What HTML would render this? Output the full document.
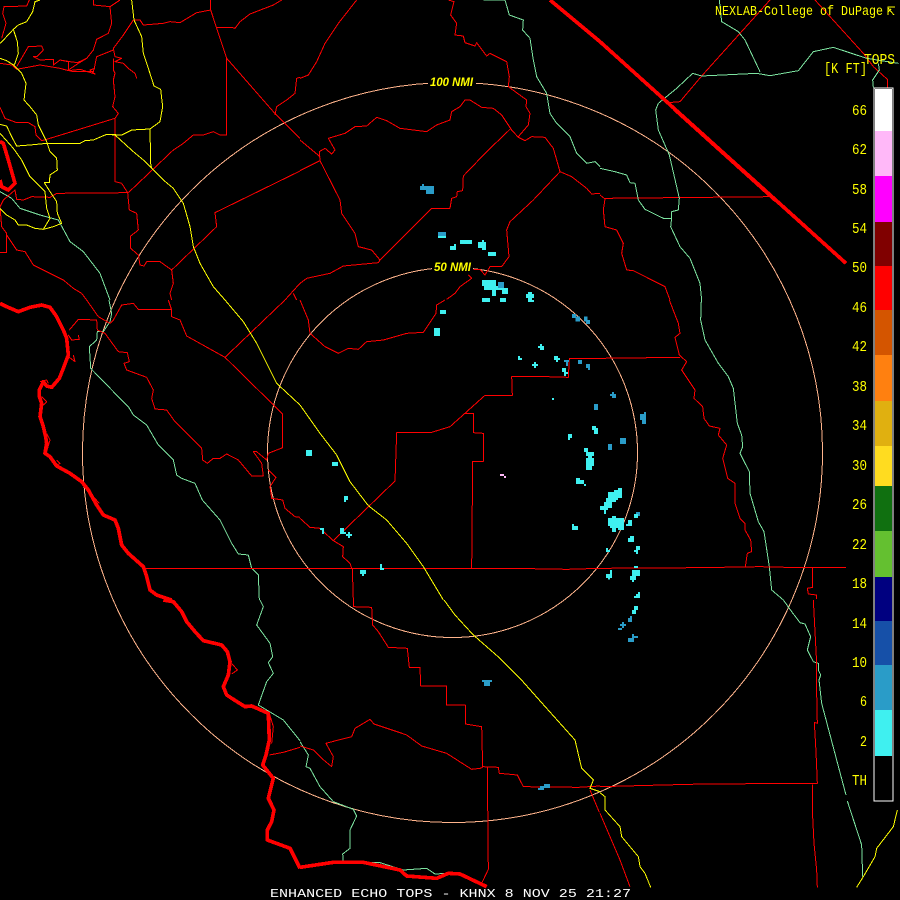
<!DOCTYPE html>
<html><head><meta charset="utf-8"><title>Enhanced Echo Tops - KHNX</title>
<style>
html,body{margin:0;padding:0;background:#000;width:900px;height:900px;overflow:hidden}
svg{display:block;position:absolute;left:0;top:0}
.l path{fill:none;stroke-width:3;stroke-linejoin:round}
.l{shape-rendering:crispEdges}
.r path{stroke:#f00}
.y path{stroke:#ff0}
.g path{stroke:#7de3a0}
.t path{stroke:#f00;stroke-width:11}
.c{fill:#3ff0f0}.b{fill:#2a9cc8}
text{font-family:"Liberation Mono",monospace;fill:#ff0}
</style></head><body>
<svg width="900" height="900" viewBox="0 0 900 900" xmlns="http://www.w3.org/2000/svg">
<rect width="900" height="900" fill="#000"/>
<g fill="none" stroke="#ffb48c" stroke-width="1" shape-rendering="crispEdges">
<circle cx="452.5" cy="452.5" r="370"/><circle cx="452.5" cy="452.5" r="185"/>
</g>
<rect x="428" y="76" width="48" height="12" fill="#000"/>
<rect x="432" y="261" width="41" height="12" fill="#000"/>

<!-- region 1 -->
<g class="l" transform="scale(.33333)">
<g class="g"><path d="M0 575L35 595 60 625 120 645 175 660 210 725 250 755 300 820 330 900"/></g>
<g class="r">
<path d="M88 0L80 18 12 20 8 40 18 70 5 115"/>
<path d="M280 0L280 15 330 20 360 0M330 20L335 70 325 100 290 118 280 150 260 175 232 188 210 185 180 180"/>
<path d="M400 60L370 105 340 145 345 170 365 175 345 185 370 190 385 205 405 220 410 235"/>
<path d="M400 60L420 60 430 75 490 70 510 65 540 68 590 38 632 30 632 0"/>
<path d="M632 30L680 175 680 405 660 405 640 395 610 405 580 405 550 430 520 450 385 578"/>
<path d="M680 175L820 335 900 415"/>
<path d="M650 82L695 82 705 85 720 65 750 42 820 15 845 0"/>
<path d="M340 150L290 170 285 195 280 215 220 215 180 205 120 195 50 208 35 195 0 190"/>
<path d="M50 200L85 140 125 138 130 150 110 170 100 170 120 180 160 178 160 195 180 180 205 185 205 210 235 190 260 175"/>
<path d="M180 205L205 212 240 208 285 222 270 210 285 205"/>
<path d="M340 175L340 210 345 220 340 240 345 290 338 320 355 340 345 355 140 418 125 422 108 405 105 380 85 368 50 368 15 355 0 322"/>
<path d="M345 355L345 545 365 550 383 578 170 580 150 592 95 590 70 600 50 598 45 570 10 600 0 620 5 680 20 700 20 757 0 757"/>
<path d="M20 705L50 750 75 755 100 795 190 840 220 865 245 880 260 900"/>
<path d="M383 578L388 630 410 640 415 690 392 708 392 745 415 765 420 795 432 798 440 785 480 785 515 810 520 850 510 880 515 900"/>
<path d="M515 810L650 680 645 638 900 513"/>
<path d="M855 900L900 850M880 880L890 900"/>
<path d="M825 345L830 320 860 300 885 280 890 235 900 232"/>
</g>
<g class="t"><path d="M0 425L10 430 25 480 45 550 25 570 5 560 0 540"/></g>
<g class="y">
<path d="M120 0L105 5 98 35 80 65 55 75 40 88 15 115 0 130"/>
<path d="M40 88L52 125 55 160 45 190 40 195"/>
<path d="M0 175L20 182 40 195 65 220 78 250 72 300 90 320 110 345 115 375 140 425 150 455 170 475 172 510 150 525 148 548 133 548 150 575 170 605 172 640 185 670 160 680 130 688 105 685 80 675 55 675 45 660 20 645 0 625"/>
<path d="M0 373L20 378 35 410 50 438 90 435 140 430 240 430 255 422 280 420 320 403 365 405 395 390 450 387 480 365 488 320 482 268 462 258 445 205 430 160 425 110 402 60 395 0"/>
<path d="M450 387L452 490 455 505"/>
<path d="M320 403L345 405 400 455 430 480 460 510 490 540 520 565 550 610 570 680 580 740 600 790 640 860 675 900"/>
<path d="M0 400L40 445 65 480 90 530 135 575 140 625 150 655 130 688"/>
</g>
</g>

<!-- region 2 -->
<g class="l" transform="translate(300,0) scale(.33333)">
<g class="g"><path d="M550 0L615 0 628 45 670 60 668 90 690 115 700 180 710 230 740 280 750 340 770 370 810 410 830 460 860 490 885 485 900 500"/></g>
<g class="r">
<path d="M170 0L115 70 75 130 50 185 25 225 0 235"/>
<path d="M445 0L462 5 452 45 470 70 465 105 490 108 495 128 525 138 530 128 560 168 570 160 620 185 628 230 625 260 680 300 678 320 690 340 685 375 655 410"/>
<path d="M0 420L60 470M0 512L60 482 58 455 75 445 95 462 105 450 85 415 135 400 165 380 200 378 230 352 260 362 300 385 380 395 410 375 450 360 455 335 480 320 495 300 510 300 545 322 580 325 605 345 635 390 655 412 675 422 695 410 735 412 760 445 780 515 815 530 860 565 875 582 900 580"/>
<path d="M60 482L120 600 125 640 165 700 175 740 215 750 240 780 395 625 450 625 455 595 470 590 472 575 488 572 490 528 560 455 630 388"/>
<path d="M240 780L235 788 130 798 90 820 20 835 0 850"/>
<path d="M780 515L700 600 630 665 620 690 627 770 605 800 570 800 555 825 540 808 520 808M505 825L515 835 480 860 465 880 440 898"/>
</g>
<g class="t"><path d="M750 0L900 125"/></g>
</g>

<!-- region 3 -->
<g class="l" transform="translate(600,0) scale(.33333)">
<g class="r">
<path d="M645 0L790 160 820 200 862 238 862 265"/>
<path d="M510 0L305 228 240 305 205 308"/>
<path d="M15 595L515 590M0 585L15 597 10 630 15 680 50 690 70 730 65 760 80 810 100 812 195 860 210 900"/>
<path d="M220 330L525 605"/>
</g>
<g class="g">
<path d="M0 505L45 515 80 525 90 548 105 550 115 600 135 628 190 655 215 655 215 635 235 630 238 595 208 465 175 390 167 330 175 310 230 265 278 220 305 228 470 220 510 227 595 212 640 155 700 142 800 175 895 190"/>
<path d="M358 0L365 65 415 95 435 120 480 215"/>
<path d="M835 190L838 210 818 240 820 262"/>
<path d="M215 655L212 680 240 740 270 775 300 850 305 900"/>
</g>
<g class="t"><path d="M0 125L738 790"/></g>
</g>

<!-- region 4 -->
<g class="l" transform="translate(0,300) scale(.33333)">
<g class="g"><path d="M327 0L335 40 330 65 310 95 292 95 290 120 268 140 272 205 345 280 385 320 400 345 440 375 475 435 520 480 530 525 545 535 585 550 607 600 660 660 695 730 715 762 745 765 755 805 775 825 778 900"/></g>
<g class="r">
<path d="M260 0L295 50 330 70M208 90L235 58 290 60 292 90 315 100 355 155 382 158 388 185 372 190 380 210 440 232 460 270 455 295 465 327 500 330 525 365 605 445 608 480 622 490 640 475 660 475 680 462 715 480 755 528 790 528 785 490 760 455 770 455 800 480 805 460 848 443 848 342 675 172 560 108 540 60 515 50 515 30 505 0"/>
<path d="M675 172L855 0"/>
<path d="M330 70L340 60 365 15 400 10 415 28 515 28"/>
<path d="M205 105L215 120 238 118 235 105M205 170L225 185 220 165"/>
<path d="M848 342L820 315"/>
<path d="M805 510L828 532 810 560 815 595 848 600 855 625 885 650 900 652"/>
<path d="M430 805L900 805"/>
<path d="M120 245L140 240 145 250M125 290L140 305 130 315M140 400L150 420 140 455M170 480L180 490 172 495M280 590L298 610"/>
</g>
<g class="t"><path d="M0 10L20 20 55 35 90 22 125 15 150 22 170 50 190 90 200 115 205 165 190 205 178 235 155 262 140 258 130 245 118 270 118 290 125 310 120 350 130 380 137 410 140 430 135 460 150 470 170 498 210 520 245 545 265 570 290 615 310 645 345 660 355 685 365 735 385 760 430 800 440 830 450 870 470 885 515 900"/></g>
<g class="y"><path d="M675 0L730 65 770 130 830 250 900 315"/></g>
</g>

<!-- region 5 -->
<g class="l" transform="translate(300,300) scale(.33333)">
<g class="r">
<path d="M0 0L25 60 30 100 75 140 115 160 145 145 175 148 200 125 250 120 320 100 370 97 408 40 410 15 435 0"/>
<path d="M100 722L285 543 290 398 395 397 450 380 555 286 637 286 635 230 740 230 805 232 808 175 900 175"/>
<path d="M0 655L30 682 60 685 100 722 130 740 128 770 150 790 155 805"/>
<path d="M495 340L520 340 520 398 550 400 550 484 518 484 515 805"/>
<path d="M157 805L160 900"/>
<path d="M0 805L635 805 800 808 900 805"/>
</g>
<g class="y"><path d="M0 315L60 400 110 465 150 545 205 617 260 660 320 730 370 800 430 900"/></g>
</g>

<!-- region 6 -->
<g class="l" transform="translate(600,300) scale(.33333)">
<g class="g"><path d="M304 0L302 60 315 120 355 190 385 230 400 265 412 370 425 405 428 440 420 460 448 515 450 580 475 665 492 695 508 800 515 870 550 900"/></g>
<g class="r">
<path d="M208 0L235 70 240 100 225 112 238 165 260 185 245 210 285 270 282 295 308 320 312 355 328 378 360 385 355 405 380 435 368 475 383 535 405 550 405 610 420 655 435 670 435 690 452 720 455 755 442 760 436 800"/>
<path d="M0 175L240 172"/>
<path d="M0 805L300 803 480 800 560 802 738 802"/>
<path d="M638 802L638 862 622 865 625 882 650 885 650 897"/>
</g>
</g>

<!-- region 7 -->
<g class="l" transform="translate(0,600) scale(.33333)">
<g class="g"><path d="M780 0L790 20 770 75 810 130 818 170 805 188 820 220 800 245 775 315 850 360 900 422"/></g>
<g class="r"><path d="M808 465L850 457 900 442M695 190L712 210 695 222M808 340L820 380 815 430"/></g>
<g class="t"><path d="M490 0L520 5 545 35 560 65 585 95 610 122 665 135 682 155 690 185 685 225 670 260 680 285 700 298 735 320 755 318 805 340 808 420 798 465 788 495 820 535 805 595 822 630 815 665 802 690 802 720 870 745 900 805"/></g>
</g>

<!-- region 8 -->
<g class="l" transform="translate(300,600) scale(.33333)">
<g class="g"><path d="M0 425L25 465 18 500 30 505 60 560 100 605 160 628 170 648 150 690 150 745 128 762 130 785 240 788 310 810 380 805 405 822 480 818 560 858"/></g>
<g class="r">
<path d="M160 0L160 20 215 22 218 75 235 95 265 142 322 145 328 202 360 202 362 258 440 258 440 315 496 315 496 372 545 380 548 500 595 502 598 520 652 525 670 560 835 562 900 558"/>
<path d="M0 438L40 450 65 475 95 500 100 470 78 430 108 422 155 410 165 385 210 358 222 372 300 398 320 405 365 438 440 460 515 508 540 505 548 502"/>
<path d="M562 502L565 808 545 850M870 570L898 637"/>
</g>
<g class="t"><path d="M0 802L100 787 190 787 300 810 320 828 410 835 445 820 480 822 560 860"/></g>
<g class="y"><path d="M432 0L465 45 520 105 600 175 660 235 740 325 825 420 845 505 880 540 870 565 900 575"/></g>
</g>

<!-- region 9 -->
<g class="l" transform="translate(600,600) scale(.33333)">
<g class="g"><path d="M550 0L575 35 600 68 615 72 632 110 622 150 640 185 655 190 655 210 662 225 657 240 665 310 710 480 738 585M742 603L785 735 788 830"/></g>
<g class="r">
<path d="M0 640L60 780 90 860"/>
<path d="M640 0L645 95 650 190 650 280 652 370 643 367 648 455 652 550 310 552 150 556 0 560"/>
<path d="M638 553L638 650 642 730 650 810 652 862"/>
</g>
<g class="y">
<path d="M0 578L15 590 15 630 60 680 65 710 115 770 120 800 135 820 152 862"/>
<path d="M892 630L880 680 830 745 825 770 790 830 770 862"/>
</g>
</g>

<!-- echoes -->
<g shape-rendering="crispEdges">
<g transform="translate(300,0) scale(.33333)">
<g class="b"><rect x="360" y="558" width="18" height="12"/><rect x="378" y="558" width="24" height="24"/><rect x="366" y="552" width="6" height="6"/><rect x="414" y="696" width="24" height="12"/></g>
<g class="c"><rect x="414" y="708" width="24" height="6"/><rect x="480" y="720" width="36" height="12"/><rect x="450" y="738" width="18" height="12"/><rect x="462" y="732" width="6" height="6"/><rect x="534" y="726" width="24" height="18"/><rect x="546" y="720" width="6" height="6"/><rect x="546" y="744" width="12" height="6"/><rect x="564" y="756" width="24" height="12"/><rect x="546" y="840" width="42" height="18"/><rect x="552" y="858" width="60" height="12"/><rect x="576" y="870" width="12" height="18"/><rect x="606" y="864" width="18" height="18"/><rect x="546" y="894" width="24" height="6"/><rect x="600" y="894" width="18" height="6"/><rect x="684" y="876" width="12" height="24"/><rect x="678" y="882" width="24" height="12"/></g>
<rect class="b" x="594" y="846" width="18" height="18"/>
</g>
<g transform="translate(300,300) scale(.33333)">
<g class="c"><rect x="546" y="0" width="24" height="6"/><rect x="600" y="0" width="18" height="6"/><rect x="684" y="0" width="18" height="6"/><rect x="420" y="30" width="18" height="12"/><rect x="402" y="84" width="18" height="24"/><rect x="714" y="138" width="18" height="6"/><rect x="720" y="132" width="6" height="18"/><rect x="726" y="138" width="6" height="12"/><rect x="654" y="168" width="6" height="12"/><rect x="654" y="174" width="12" height="6"/><rect x="696" y="192" width="18" height="6"/><rect x="702" y="186" width="6" height="18"/><rect x="762" y="168" width="12" height="12"/><rect x="768" y="174" width="12" height="6"/><rect x="768" y="180" width="6" height="6"/><rect x="786" y="204" width="12" height="12"/><rect x="792" y="216" width="12" height="6"/><rect x="792" y="222" width="6" height="6"/><rect x="756" y="294" width="6" height="6"/><rect x="876" y="378" width="12" height="12"/><rect x="882" y="384" width="12" height="18"/><rect x="804" y="402" width="12" height="12"/><rect x="804" y="414" width="6" height="6"/><rect x="852" y="444" width="12" height="12"/><rect x="858" y="456" width="24" height="12"/><rect x="864" y="468" width="12" height="6"/><rect x="858" y="474" width="24" height="24"/><rect x="858" y="498" width="18" height="12"/><rect x="828" y="534" width="12" height="18"/><rect x="840" y="540" width="12" height="12"/><rect x="852" y="552" width="6" height="6"/><rect x="816" y="672" width="6" height="12"/><rect x="816" y="678" width="18" height="12"/><rect x="18" y="450" width="18" height="18"/><rect x="96" y="486" width="18" height="12"/><rect x="132" y="588" width="12" height="12"/><rect x="132" y="600" width="6" height="6"/><rect x="60" y="684" width="12" height="6"/><rect x="66" y="690" width="6" height="12"/><rect x="120" y="684" width="12" height="18"/><rect x="126" y="696" width="12" height="6"/><rect x="138" y="702" width="18" height="6"/><rect x="144" y="696" width="6" height="18"/><rect x="240" y="792" width="6" height="12"/><rect x="240" y="804" width="12" height="6"/><rect x="180" y="810" width="18" height="12"/><rect x="186" y="822" width="6" height="6"/></g>
<g class="b"><rect x="816" y="42" width="12" height="12"/><rect x="826" y="50" width="14" height="15"/><rect x="852" y="50" width="10" height="15"/><rect x="858" y="60" width="12" height="12"/><rect x="792" y="180" width="15" height="6"/><rect x="798" y="186" width="6" height="12"/><rect x="834" y="180" width="12" height="12"/><rect x="858" y="192" width="12" height="12"/><rect x="864" y="204" width="6" height="6"/><rect x="882" y="312" width="12" height="18"/></g>
<g fill="#ffb8f8"><rect x="600" y="522" width="12" height="6"/><rect x="612" y="528" width="6" height="6"/></g>
</g>
<g transform="translate(600,300) scale(.33333)">
<g class="b"><rect x="36" y="276" width="6" height="18"/><rect x="30" y="282" width="18" height="6"/><rect x="42" y="282" width="6" height="12"/><rect x="120" y="342" width="12" height="18"/><rect x="132" y="336" width="6" height="36"/><rect x="126" y="360" width="6" height="12"/><rect x="60" y="414" width="18" height="18"/><rect x="24" y="432" width="12" height="18"/><rect x="108" y="636" width="12" height="12"/></g>
<g class="c"><rect x="54" y="564" width="12" height="30"/><rect x="42" y="570" width="24" height="18"/><rect x="24" y="576" width="30" height="24"/><rect x="18" y="594" width="30" height="12"/><rect x="12" y="606" width="24" height="18"/><rect x="0" y="618" width="24" height="12"/><rect x="12" y="630" width="6" height="12"/><rect x="36" y="648" width="12" height="12"/><rect x="24" y="654" width="48" height="24"/><rect x="30" y="672" width="42" height="12"/><rect x="36" y="684" width="12" height="12"/><rect x="54" y="678" width="18" height="12"/><rect x="84" y="660" width="12" height="18"/><rect x="78" y="672" width="18" height="6"/><rect x="90" y="708" width="12" height="18"/><rect x="84" y="714" width="18" height="12"/><rect x="108" y="738" width="12" height="12"/><rect x="102" y="750" width="12" height="6"/><rect x="108" y="756" width="6" height="6"/><rect x="18" y="744" width="6" height="12"/><rect x="24" y="750" width="6" height="6"/><rect x="102" y="642" width="12" height="12"/><rect x="102" y="798" width="12" height="6"/><rect x="96" y="810" width="24" height="18"/><rect x="90" y="828" width="18" height="12"/><rect x="96" y="840" width="6" height="6"/><rect x="30" y="810" width="6" height="18"/><rect x="18" y="822" width="18" height="12"/><rect x="24" y="832" width="6" height="6"/><rect x="102" y="888" width="18" height="6"/><rect x="114" y="876" width="6" height="18"/><rect x="108" y="882" width="12" height="6"/></g>
</g>
<g transform="translate(600,600) scale(.33333)">
<g class="c"><rect x="96" y="30" width="12" height="12"/><rect x="102" y="18" width="12" height="12"/></g>
<g class="b"><rect x="84" y="54" width="12" height="12"/><rect x="90" y="48" width="6" height="6"/><rect x="60" y="72" width="18" height="6"/><rect x="66" y="66" width="6" height="18"/><rect x="54" y="84" width="12" height="6"/><rect x="84" y="114" width="18" height="12"/><rect x="96" y="102" width="6" height="12"/><rect x="102" y="108" width="12" height="6"/></g>
</g>
<g class="b" transform="translate(300,600) scale(.33333)"><rect x="546" y="240" width="30" height="6"/><rect x="552" y="246" width="18" height="12"/><rect x="732" y="552" width="18" height="6"/><rect x="720" y="558" width="30" height="6"/><rect x="714" y="564" width="18" height="6"/></g>
</g>

<!-- color bar -->
<g shape-rendering="crispEdges">
<rect x="874" y="88" width="19" height="713" fill="#000" stroke="#fff" stroke-width="1.4"/>
<rect x="875" y="89" width="17" height="42" fill="#fff"/>
<rect x="875" y="131" width="17" height="45" fill="#ffb8f8"/>
<rect x="875" y="176" width="17" height="46" fill="#ff00ff"/>
<rect x="875" y="222" width="17" height="44" fill="#800000"/>
<rect x="875" y="266" width="17" height="44" fill="#ff0000"/>
<rect x="875" y="310" width="17" height="45" fill="#d45500"/>
<rect x="875" y="355" width="17" height="46" fill="#ff8010"/>
<rect x="875" y="401" width="17" height="45" fill="#e0b010"/>
<rect x="875" y="446" width="17" height="40" fill="#ffdc20"/>
<rect x="875" y="486" width="17" height="45" fill="#107010"/>
<rect x="875" y="531" width="17" height="46" fill="#64c030"/>
<rect x="875" y="577" width="17" height="44" fill="#000080"/>
<rect x="875" y="621" width="17" height="44" fill="#1650a8"/>
<rect x="875" y="665" width="17" height="45" fill="#2a9cc8"/>
<rect x="875" y="710" width="17" height="46" fill="#3ff0f0"/>
</g>

<!-- labels -->
<g font-size="15" text-anchor="start">
<text x="852" y="115" textLength="15" lengthAdjust="spacingAndGlyphs">66</text>
<text x="852" y="154" textLength="15" lengthAdjust="spacingAndGlyphs">62</text>
<text x="852" y="194" textLength="15" lengthAdjust="spacingAndGlyphs">58</text>
<text x="852" y="233" textLength="15" lengthAdjust="spacingAndGlyphs">54</text>
<text x="852" y="272" textLength="15" lengthAdjust="spacingAndGlyphs">50</text>
<text x="852" y="312" textLength="15" lengthAdjust="spacingAndGlyphs">46</text>
<text x="852" y="351" textLength="15" lengthAdjust="spacingAndGlyphs">42</text>
<text x="852" y="391" textLength="15" lengthAdjust="spacingAndGlyphs">38</text>
<text x="852" y="430" textLength="15" lengthAdjust="spacingAndGlyphs">34</text>
<text x="852" y="470" textLength="15" lengthAdjust="spacingAndGlyphs">30</text>
<text x="852" y="509" textLength="15" lengthAdjust="spacingAndGlyphs">26</text>
<text x="852" y="549" textLength="15" lengthAdjust="spacingAndGlyphs">22</text>
<text x="852" y="588" textLength="15" lengthAdjust="spacingAndGlyphs">18</text>
<text x="852" y="628" textLength="15" lengthAdjust="spacingAndGlyphs">14</text>
<text x="852" y="667" textLength="15" lengthAdjust="spacingAndGlyphs">10</text>
<text x="860" y="706" textLength="7" lengthAdjust="spacingAndGlyphs">6</text>
<text x="860" y="746" textLength="7" lengthAdjust="spacingAndGlyphs">2</text>
<text x="852" y="785" textLength="15" lengthAdjust="spacingAndGlyphs">TH</text>
<text x="864" y="64" textLength="31" lengthAdjust="spacingAndGlyphs">TOPS</text>
<text x="824" y="73" textLength="43" lengthAdjust="spacingAndGlyphs">[K FT]</text>
<text x="715" y="15" font-size="14" textLength="168" lengthAdjust="spacingAndGlyphs">NEXLAB-College of DuPage</text>
</g>
<path d="M895 7H888V15M888 8L894 15M888 12L891 9" fill="none" stroke="#ff0" stroke-width="1" shape-rendering="crispEdges"/>
<text x="430" y="86" font-size="12" font-style="italic" font-weight="bold" style="font-family:'Liberation Sans',sans-serif" textLength="43" lengthAdjust="spacingAndGlyphs">100 NMI</text>
<text x="434" y="271" font-size="12" font-style="italic" font-weight="bold" style="font-family:'Liberation Sans',sans-serif" textLength="37" lengthAdjust="spacingAndGlyphs">50 NMI</text>
<text x="270" y="897" font-size="11.5" style="fill:#fff" textLength="361" lengthAdjust="spacingAndGlyphs">ENHANCED ECHO TOPS - KHNX 8 NOV 25 21:27</text>
</svg>
</body></html>
